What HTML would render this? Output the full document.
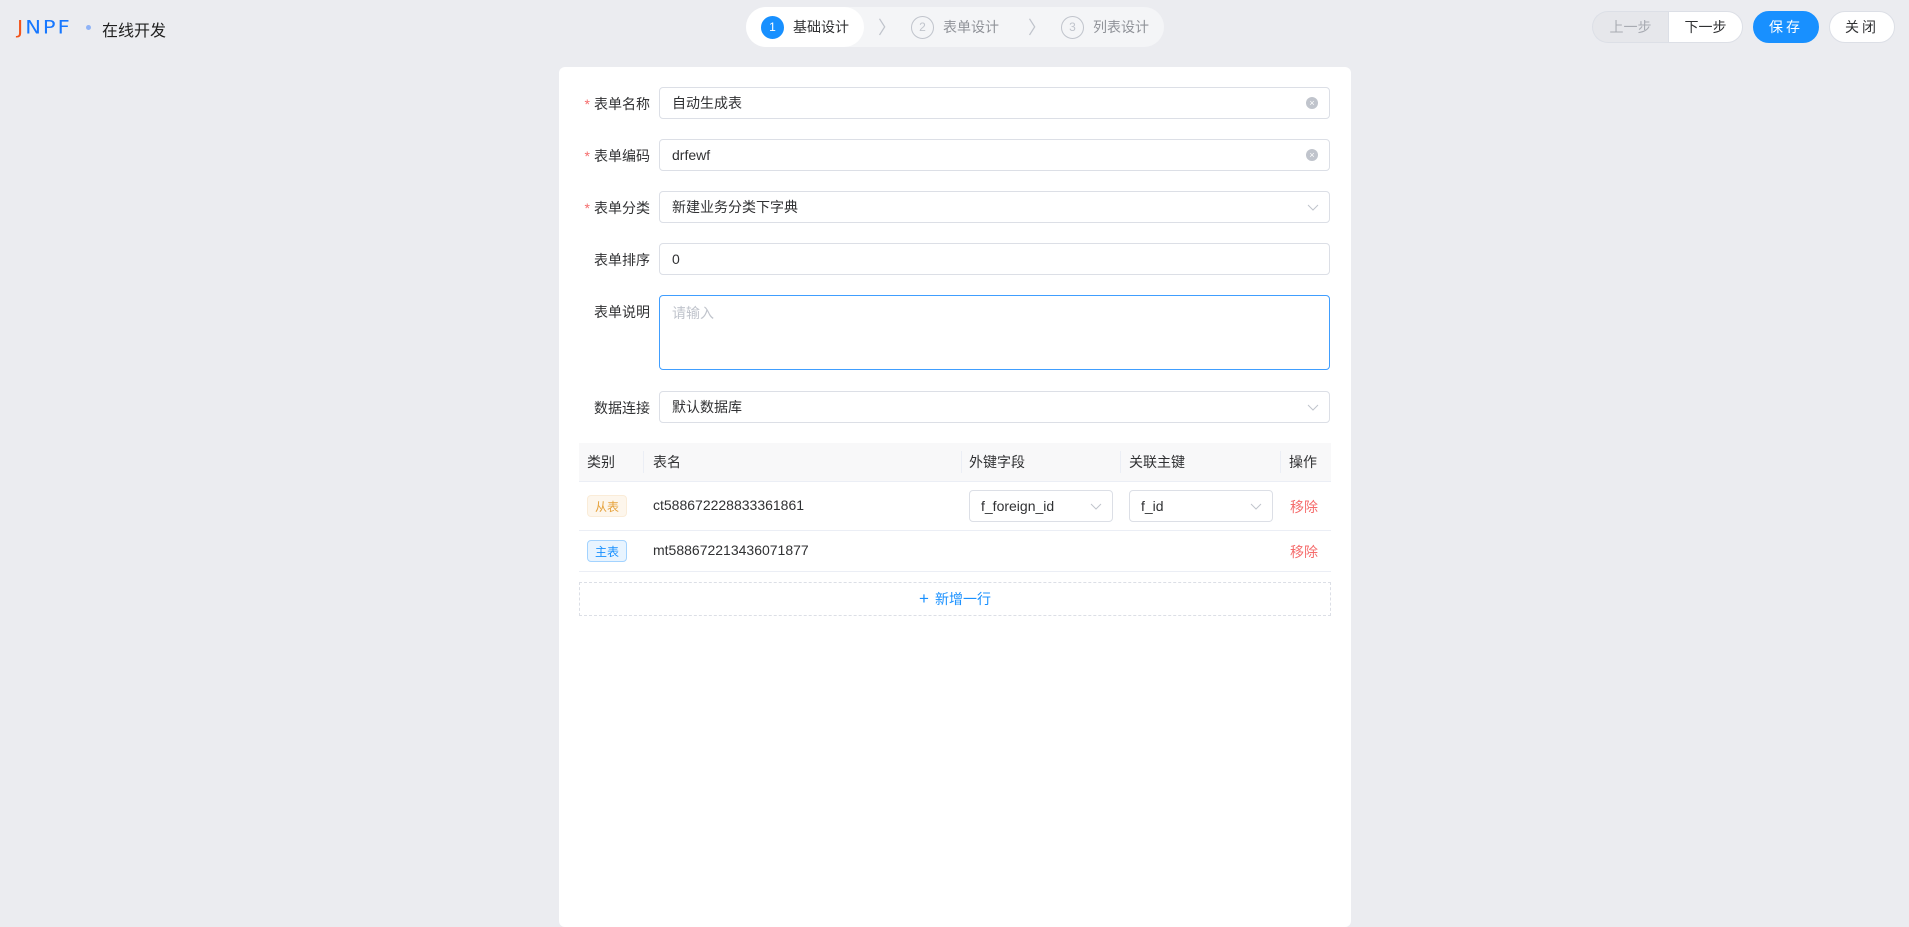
<!DOCTYPE html>
<html><head><meta charset="utf-8"><style>
*{box-sizing:border-box;margin:0;padding:0}
body{width:1909px;height:906px;background:#ebecf0;font-family:"Liberation Sans","Noto Sans CJK SC",sans-serif;font-size:14px;color:#303133;position:relative;overflow:hidden}
.abs{position:absolute}
.logo{left:17px;top:15px;font-size:21px;font-weight:normal;letter-spacing:2px;font-family:"DejaVu Sans","Liberation Sans",sans-serif;color:#1677ff;transform:scaleY(.9)}
.steps{left:746px;top:7px;width:418px;height:40px;border-radius:20px;background:#f4f5f7}
.st{position:absolute;top:0;height:40px;display:flex;align-items:center;font-size:14px;color:#909399}
.num{width:23px;height:23px;border-radius:50%;border:1px solid #c0c4cc;display:flex;align-items:center;justify-content:center;font-size:12px;color:#c0c4cc;margin-right:9px}
.btn{position:absolute;top:11px;height:32px;border-radius:16px;display:flex;align-items:center;justify-content:center;font-size:14px;border:1px solid #dcdfe6;background:#fff;color:#303133}
.card{left:559px;top:67px;width:792px;height:860px;background:#fff;border-radius:6px}
.lab{position:absolute;right:1259px;width:100px;text-align:right;font-size:14px;color:#303133}
.lab b{color:#f56c6c;font-weight:normal;margin-right:4px}
.inp{position:absolute;left:659px;width:671px;height:32px;border:1px solid #dcdfe6;border-radius:4px;padding-left:12px;display:flex;align-items:center;font-size:14px;color:#303133}
.clr{position:absolute;right:11px;top:9px;width:12px;height:12px;border-radius:50%;background:#c0c4cc;color:#fff;font-size:9px;line-height:12px;text-align:center}
.arr{position:absolute;right:10px;top:9px}
.th{position:absolute;top:443px;height:38px;line-height:38px;font-size:14px;color:#303133}
.dv{position:absolute;top:451px;width:1px;height:22px;background:#ebeef5}
.hl{position:absolute;left:579px;width:752px;height:1px;background:#ebeef5}
.tag{position:absolute;left:587px;width:40px;height:22px;border-radius:4px;font-size:12px;display:flex;align-items:center;justify-content:center}
.sel{position:absolute;top:490px;width:144px;height:32px;border:1px solid #dcdfe6;border-radius:4px;padding-left:11px;display:flex;align-items:center}
.rm{position:absolute;left:1290px;color:#f56c6c;font-size:14px}
</style></head><body>
<div class="abs logo"><span style="color:#f2541b">J</span>NPF</div>
<div class="abs" style="left:86px;top:25px;width:5px;height:5px;border-radius:50%;background:#8fb3f7"></div>
<div class="abs" style="left:102px;top:17px;font-size:16px;color:#1f1f1f">在线开发</div>

<div class="abs steps">
 <div class="abs" style="left:0;top:0;width:118px;height:40px;border-radius:20px;background:#fff"></div>
 <div class="st" style="left:15px;color:#303133"><span class="num" style="background:#1890ff;border-color:#1890ff;color:#fff">1</span>基础设计</div>
 <div class="st" style="left:132px;color:#c0c4cc;font-size:18px">〉</div>
 <div class="st" style="left:165px"><span class="num">2</span>表单设计</div>
 <div class="st" style="left:282px;color:#c0c4cc;font-size:18px">〉</div>
 <div class="st" style="left:315px"><span class="num">3</span>列表设计</div>
</div>

<div class="btn" style="left:1592px;width:76px;border-radius:16px 0 0 16px;background:#e6e7eb;color:#a8abb2;border-right:none">上一步</div>
<div class="btn" style="left:1668px;width:75px;border-radius:0 16px 16px 0">下一步</div>
<div class="btn" style="left:1753px;width:66px;background:#1890ff;border-color:#1890ff;color:#fff;letter-spacing:3px">保存</div>
<div class="btn" style="left:1829px;width:66px;letter-spacing:3px">关闭</div>

<div class="abs card"></div>

<div class="lab" style="top:94px"><b>*</b>表单名称</div>
<div class="inp" style="top:87px">自动生成表<span class="clr">×</span></div>
<div class="lab" style="top:146px"><b>*</b>表单编码</div>
<div class="inp" style="top:139px">drfewf<span class="clr">×</span></div>
<div class="lab" style="top:198px"><b>*</b>表单分类</div>
<div class="inp" style="top:191px">新建业务分类下字典<svg class="arr" width="12" height="12" viewBox="0 0 12 12"><path d="M1 4l5 5 5-5" fill="none" stroke="#c0c4cc" stroke-width="1"/></svg></div>
<div class="lab" style="top:250px">表单排序</div>
<div class="inp" style="top:243px">0</div>
<div class="lab" style="top:302px">表单说明</div>
<div class="inp" style="top:295px;height:75px;align-items:flex-start;padding-top:7px;border-color:#409eff;color:#c0c4cc">请输入</div>
<div class="lab" style="top:398px">数据连接</div>
<div class="inp" style="top:391px">默认数据库<svg class="arr" width="12" height="12" viewBox="0 0 12 12"><path d="M1 4l5 5 5-5" fill="none" stroke="#c0c4cc" stroke-width="1"/></svg></div>

<div class="abs" style="left:579px;top:443px;width:752px;height:38px;background:#f8f8f9"></div>
<div class="th" style="left:587px">类别</div>
<div class="dv" style="left:643px"></div>
<div class="th" style="left:653px">表名</div>
<div class="dv" style="left:961px"></div>
<div class="th" style="left:969px">外键字段</div>
<div class="dv" style="left:1120px"></div>
<div class="th" style="left:1129px">关联主键</div>
<div class="dv" style="left:1280px"></div>
<div class="th" style="left:1289px">操作</div>
<div class="hl" style="top:481px"></div>
<div class="hl" style="top:530px"></div>
<div class="hl" style="top:571px"></div>

<div class="tag" style="top:495px;background:#fdf6ec;border:1px solid #faecd8;color:#e6a23c">从表</div>
<div class="abs" style="left:653px;top:497px">ct588672228833361861</div>
<div class="sel" style="left:969px">f_foreign_id<svg class="arr" width="12" height="12" viewBox="0 0 12 12"><path d="M1 4l5 5 5-5" fill="none" stroke="#c0c4cc"/></svg></div>
<div class="sel" style="left:1129px">f_id<svg class="arr" width="12" height="12" viewBox="0 0 12 12"><path d="M1 4l5 5 5-5" fill="none" stroke="#c0c4cc"/></svg></div>
<div class="rm" style="top:497px">移除</div>

<div class="tag" style="top:540px;background:#e8f4ff;border:1px solid #a3d3ff;color:#1890ff">主表</div>
<div class="abs" style="left:653px;top:542px">mt588672213436071877</div>
<div class="rm" style="top:542px">移除</div>

<div class="abs" style="left:579px;top:582px;width:752px;height:34px;border:1px dashed #dcdfe6;display:flex;align-items:center;justify-content:center;color:#1890ff;font-size:14px"><span style="font-size:17px;margin-right:6px">+</span>新增一行</div>
</body></html>
